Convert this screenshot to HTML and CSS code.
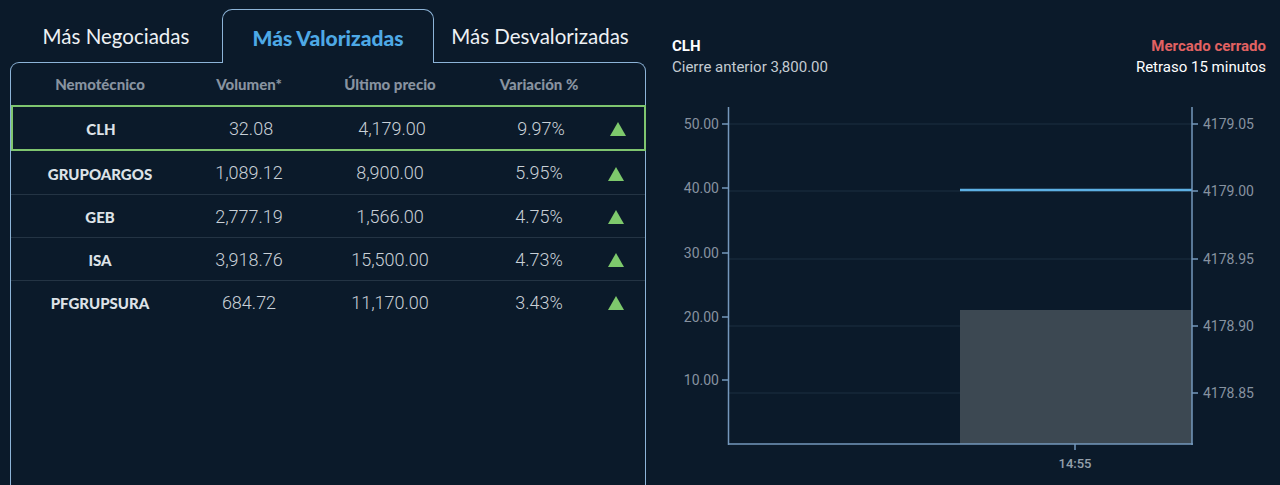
FILE: index.html
```html
<!DOCTYPE html>
<html lang="es">
<head>
<meta charset="utf-8">
<title>Acciones</title>
<link rel="stylesheet" href="styles.css">
</head>
<body>
<div class="page">
  <section class="market">
    <nav class="tabs">
      <div class="tab">Más Negociadas</div>
      <div class="tab active">Más Valorizadas</div>
      <div class="tab">Más Desvalorizadas</div>
    </nav>
    <div class="panel">
      <div class="row head">
        <div>Nemotécnico</div>
        <div>Volumen*</div>
        <div>Último precio</div>
        <div>Variación %</div>
        <div></div>
      </div>
      <div class="row item selected">
        <div class="name">CLH</div><div class="num">32.08</div><div class="num">4,179.00</div><div class="num">9.97%</div><div class="up"></div>
      </div>
      <div class="row item">
        <div class="name">GRUPOARGOS</div><div class="num">1,089.12</div><div class="num">8,900.00</div><div class="num">5.95%</div><div class="up"></div>
      </div>
      <div class="row item">
        <div class="name">GEB</div><div class="num">2,777.19</div><div class="num">1,566.00</div><div class="num">4.75%</div><div class="up"></div>
      </div>
      <div class="row item">
        <div class="name">ISA</div><div class="num">3,918.76</div><div class="num">15,500.00</div><div class="num">4.73%</div><div class="up"></div>
      </div>
      <div class="row item last">
        <div class="name">PFGRUPSURA</div><div class="num">684.72</div><div class="num">11,170.00</div><div class="num">3.43%</div><div class="up"></div>
      </div>
    </div>
  </section>
  <section class="chart">
    <header class="chart-head">
      <div class="col">
        <div class="ticker">CLH</div>
        <div class="sub">Cierre anterior 3,800.00</div>
      </div>
      <div class="col right">
        <div class="closed">Mercado cerrado</div>
        <div class="delay">Retraso 15 minutos</div>
      </div>
    </header>
    <svg class="plot" width="620" height="390" viewBox="660 95 620 390">
      <g class="grid">
        <line x1="729" y1="124" x2="1192" y2="124"/>
        <line x1="729" y1="191" x2="1192" y2="191"/>
        <line x1="729" y1="259" x2="1192" y2="259"/>
        <line x1="729" y1="326" x2="1192" y2="326"/>
        <line x1="729" y1="393" x2="1192" y2="393"/>
      </g>
      <rect class="bar" x="960" y="310" width="232" height="134"/>
      <line class="price" x1="960" y1="190" x2="1192" y2="190"/>
      <g class="axis">
        <line x1="728.5" y1="107" x2="728.5" y2="445"/>
        <line x1="1192" y1="107" x2="1192" y2="445"/>
        <line x1="728" y1="444" x2="1193" y2="444"/>
        <line x1="722" y1="124" x2="728" y2="124"/>
        <line x1="722" y1="188" x2="728" y2="188"/>
        <line x1="722" y1="253" x2="728" y2="253"/>
        <line x1="722" y1="317" x2="728" y2="317"/>
        <line x1="722" y1="380" x2="728" y2="380"/>
        <line x1="1192" y1="124" x2="1198" y2="124"/>
        <line x1="1192" y1="191" x2="1198" y2="191"/>
        <line x1="1192" y1="259" x2="1198" y2="259"/>
        <line x1="1192" y1="326" x2="1198" y2="326"/>
        <line x1="1192" y1="393" x2="1198" y2="393"/>
        <line x1="1075" y1="444" x2="1075" y2="450"/>
      </g>
      <g class="lab left">
        <text x="719" y="124">50.00</text>
        <text x="719" y="188">40.00</text>
        <text x="719" y="253">30.00</text>
        <text x="719" y="317">20.00</text>
        <text x="719" y="380">10.00</text>
      </g>
      <g class="lab rightlab">
        <text x="1203" y="124">4179.05</text>
        <text x="1203" y="191">4179.00</text>
        <text x="1203" y="259">4178.95</text>
        <text x="1203" y="326">4178.90</text>
        <text x="1203" y="393">4178.85</text>
      </g>
      <text class="xlab" x="1075" y="463">14:55</text>
    </svg>
  </section>
</div>
</body>
</html>
```
FILE: styles.css
```css
html, body {
  margin: 0;
  padding: 0;
  background: #0b1a2a;
  height: 100%;
  overflow: hidden;
}
.page {
  display: flex;
  height: 485px;
}
.market {
  width: 636px;
  padding-left: 10px;
  padding-top: 9px;
  display: flex;
  flex-direction: column;
}
.tabs {
  display: flex;
  height: 53px;
}
.tab {
  width: 212px;
  box-sizing: border-box;
  display: flex;
  align-items: center;
  justify-content: center;
  font-family: Lato, "Liberation Sans", sans-serif;
  font-size: 20.5px;
  color: #eef1f4;
  padding-top: 1px;
}
.tab.active {
  color: #4ea9e6;
  font-weight: 900;
  font-size: 21px;
  border: 1px solid #8db4d8;
  border-bottom: none;
  border-radius: 10px 10px 0 0;
  background: #0b1a2a;
  position: relative;
  z-index: 1;
  height: 54px;
  margin-bottom: -1px;
}
.panel {
  flex: 1;
  border: 1px solid #8db4d8;
  border-bottom: none;
  border-radius: 9px 9px 0 0;
}
.row {
  display: grid;
  grid-template-columns: 178px 120px 162px 136px 18px;
  align-items: center;
  text-align: center;
}
.head {
  height: 42px;
  font-family: Lato, "Liberation Sans", sans-serif;
  font-weight: 900;
  font-size: 15px;
  color: #8893a0;
}
.item {
  height: 42px;
  border-bottom: 1px solid #243444;
}
.item.selected + .item {
  height: 43px;
}
.item.last {
  border-bottom: none;
}
.item.selected {
  height: 42px;
  border: 2px solid #7fc56f;
  margin: 0 -1px 0 0;
}
.item.selected .name { margin-left: -2px; }
.name {
  font-family: Lato, "Liberation Sans", sans-serif;
  font-weight: 900;
  font-size: 15px;
  color: #dde2e7;
  padding-top: 2px;
}
.num {
  font-family: Roboto, "Liberation Sans", sans-serif;
  font-weight: 300;
  font-size: 18px;
  color: #c9d0d7;
}
.up {
  width: 0;
  height: 0;
  justify-self: center;
  border-left: 8px solid transparent;
  border-right: 8px solid transparent;
  border-bottom: 14px solid #7ec96c;
  margin-top: 2px;
}
.chart {
  width: 620px;
  margin-left: 14px;
  display: flex;
  flex-direction: column;
}
.chart-head {
  display: flex;
  justify-content: space-between;
  padding: 36px 14px 0 12px;
  font-family: Roboto, "Liberation Sans", sans-serif;
  font-size: 15px;
  line-height: 21px;
}
.right { text-align: right; }
.ticker { font-weight: 700; color: #ffffff; }
.sub { color: #c4cbd2; }
.closed { font-weight: 700; color: #e26262; }
.delay { color: #ffffff; }
.plot {
  display: block;
  margin-top: 17px;
}
.grid line { stroke: #1d2f41; stroke-width: 1; }
.axis line { stroke: #7598bc; stroke-width: 1.5; }
.bar { fill: #3c4852; }
.price { stroke: #5db0e4; stroke-width: 2.5; }
.lab text {
  font-family: Roboto, "Liberation Sans", sans-serif;
  font-size: 14px;
  fill: #8792a0;
  dominant-baseline: central;
}
.lab.left text { text-anchor: end; }
.xlab {
  font-family: Roboto, "Liberation Sans", sans-serif;
  font-size: 13px;
  font-weight: 500;
  fill: #95a0ab;
  text-anchor: middle;
  dominant-baseline: central;
}
```
